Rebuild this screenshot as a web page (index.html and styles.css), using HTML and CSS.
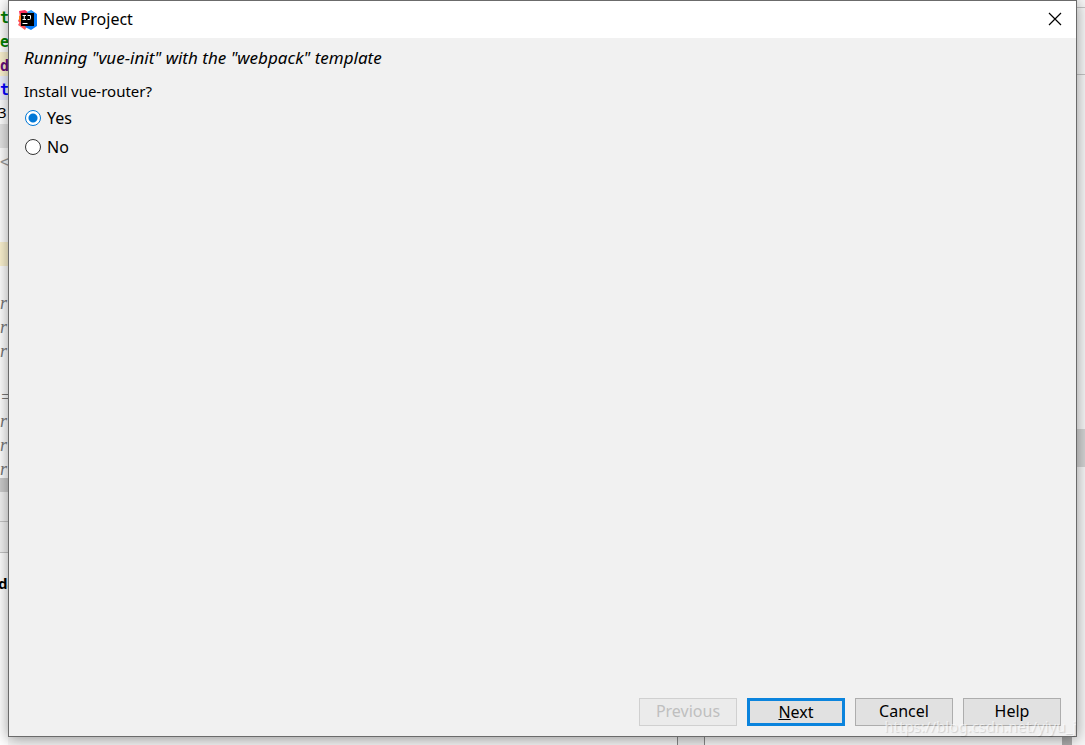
FILE: index.html
```
<!DOCTYPE html>
<html lang="en">
<head>
    <meta charset="UTF-8">
    <meta name="viewport" content="width=device-width, initial-scale=1.0">
    <title>New Project</title>
    <link rel="stylesheet" href="styles.css">
</head>
<body>
    <div class="desktop">
        <div class="editor">
            <div class="line tag">t</div>
            <div class="line tag">e</div>
            <div class="line attr warn">d</div>
            <div class="line blue">t</div>
            <div class="line plain">3</div>
            <div class="line current"></div>
            <div class="line angle">&lt;</div>
            <div class="line"></div>
            <div class="line"></div>
            <div class="line short"></div>
            <div class="line warn"></div>
            <div class="line"></div>
            <div class="line comment">r</div>
            <div class="line comment">r</div>
            <div class="line comment">r</div>
            <div class="line short"></div>
            <div class="line comment">=</div>
            <div class="line comment">r</div>
            <div class="line comment">r</div>
            <div class="line comment short">r</div>
            <div class="hscroll"></div>
            <div class="crumbs"></div>
            <div class="toolbar"></div>
            <div class="console">da</div>
        </div>

        <form class="dialog">
            <div class="title-bar">
                <svg class="logo" width="20" height="20" viewBox="0 0 20 20">
                    <path d="M1 1l6-1 4 3-1 7-7 4-3-3 2-4z" fill="#fe315d"/>
                    <path d="M0 15l3-5 7 4-3 6-4-3z" fill="#fb5a5f"/>
                    <path d="M1 6l3-2 0 8-3-1z" fill="#f97a12"/>
                    <path d="M13 0l6 4v12l-6 4-6-3 5-8z" fill="#087cfa"/>
                    <path d="M9 2l4-2 2 3-4 2z" fill="#2b9af3"/>
                    <rect x="3" y="3" width="13" height="13" fill="#000"/>
                    <path d="M4.500 5.500h3.500M6.250 5.500v4M4.500 9.500h3.500M9.500 5.500h3v3q0 1-1 1h-2M4.500 13.500h5" fill="none" stroke="#fff" stroke-width="1"/>
                </svg>
                <span class="title">New Project</span>
                <button type="button" class="close" aria-label="Close">
                    <svg width="14" height="14" viewBox="0 0 14 14">
                        <path d="M1 1l12 12M13 1L1 13" stroke="#000" stroke-width="1.200"/>
                    </svg>
                </button>
            </div>
            <div class="content">
                <p class="running">Running "vue-init" with the "webpack" template</p>
                <fieldset class="question">
                    <legend>Install vue-router?</legend>
                    <label class="option"><input type="radio" name="router" checked>Yes</label>
                    <label class="option"><input type="radio" name="router">No</label>
                </fieldset>
            </div>
            <div class="buttons">
                <button type="button" disabled>Previous</button>
                <button type="button" class="default"><u>N</u>ext</button>
                <button type="button">Cancel</button>
                <button type="button">Help</button>
            </div>
            <span class="watermark">https://blog.csdn.net/yiyu_j</span>
        </form>

        <div class="side">
            <div class="side-top"></div>
            <div class="side-tabs"></div>
            <div class="side-panel"></div>
            <div class="side-thumb"></div>
        </div>

        <div class="bottom">
            <div class="bottom-divider"></div>
            <div class="bottom-thumb"></div>
        </div>
    </div>
</body>
</html>
```

FILE: styles.css
```
* {
    box-sizing: border-box;
}
body {
    margin: 0;
    font-family: "Noto Sans", "Open Sans", sans-serif;
    font-size: 16px;
    color: #000;
    background-color: #f7f7f7;
}
.desktop {
    display: grid;
    grid-template-columns: 8px 1fr 8px;
    grid-template-rows: 1fr 8px;
    height: 100vh;
    overflow: hidden;
}

/* editor behind the dialog */
.editor {
    grid-row: 1 / 3;
    padding-top: 4px;
    overflow: hidden;
    background-color: #fff;
    font-family: "DejaVu Sans Mono", monospace;
    font-size: 15px;
}
.line {
    height: 24px;
    line-height: 28px;
}
.line.short {
    height: 22px;
}
.tag {
    color: #008000;
    font-weight: bold;
}
.attr {
    color: #660e7a;
    font-weight: bold;
}
.blue {
    color: #0000ff;
    font-weight: bold;
    background-color: #edf0ff;
}
.plain {
    font-family: "Noto Sans", sans-serif;
    text-indent: -2px;
    line-height: 24px;
}
.warn {
    background-color: #fcf3d0;
}
.current {
    background-color: #e4e4e4;
}
.angle {
    color: #999;
}
.comment {
    color: #777;
    font-family: "Liberation Serif", serif;
    font-style: italic;
    font-size: 18px;
    line-height: 26px;
}
.hscroll {
    height: 14px;
    background-color: #ccc;
}
.crumbs {
    height: 30px;
    background-color: #f2f2f2;
    border-bottom: 1px solid #c4c4c4;
}
.toolbar {
    height: 31px;
    background-color: #f2f2f2;
    border-bottom: 1px solid #c4c4c4;
}
.console {
    padding-top: 20px;
    font-family: "Noto Sans", sans-serif;
    font-weight: bold;
    text-indent: -2px;
}

/* dialog */
.dialog {
    position: relative;
    display: flex;
    flex-direction: column;
    background-color: #f1f1f1;
    border: 1px solid #6b6b6b;
    box-shadow: 0 2px 14px rgba(0, 0, 0, 0.4);
}
.title-bar {
    display: flex;
    align-items: center;
    height: 37px;
    padding: 0 14px 0 9px;
    background-color: #fff;
}
.title {
    flex: 1;
    margin-left: 5px;
    line-height: 24px;
    padding-bottom: 2px;
}
.close {
    display: flex;
    padding: 0 0 2px;
    border: none;
    background: none;
}
.content {
    flex: 1;
    padding: 8px 15px;
}
.running {
    margin: 0;
    font-size: 17px;
    line-height: 24px;
    font-style: italic;
}
.question {
    margin: 9px 0 0;
    padding: 0;
    border: none;
}
.question legend {
    padding: 0;
    font-size: 15px;
    line-height: 24px;
}
.option {
    display: flex;
    align-items: center;
    height: 28px;
    margin-top: 1px;
}
.option input {
    appearance: none;
    width: 16px;
    height: 16px;
    margin: 0 6px 0 1px;
    border: 1px solid #333;
    border-radius: 50%;
    background-color: #fff;
}
.option input:checked {
    border-color: #0078d7;
    background: radial-gradient(circle, #0078d7 4px, #fff 5px);
}
.buttons {
    display: flex;
    justify-content: flex-end;
    gap: 10px;
    padding: 0 15px 10px;
}
.buttons button {
    width: 98px;
    height: 28px;
    padding: 0 0 2px;
    font: inherit;
    line-height: 22px;
    color: #000;
    background-color: #e1e1e1;
    border: 1px solid #adadad;
}
.buttons button:disabled {
    color: #bfbfbf;
    background-color: #ebebeb;
    border-color: #d0d0d0;
}
.buttons .default {
    border: 3px solid #0b84dd;
}
.watermark {
    position: absolute;
    right: 0;
    bottom: 0;
    font-size: 15px;
    color: rgba(255, 255, 255, 0.6);
    text-shadow: 1px 1px 1px rgba(0, 0, 0, 0.15);
    pointer-events: none;
}

/* right and bottom edges of the main window */
.side {
    grid-row: 1 / 3;
    grid-column: 3;
}
.side-top {
    height: 8px;
    border-bottom: 1px solid #c4c4c4;
}
.side-tabs {
    height: 67px;
    border-bottom: 1px solid #c4c4c4;
}
.side-panel {
    height: 354px;
}
.side-thumb {
    height: 38px;
    background-color: rgba(0, 0, 0, 0.14);
}
.bottom {
    grid-column: 2;
    display: flex;
    justify-content: flex-end;
}
.bottom-divider {
    width: 28px;
    margin-right: 357px;
    border-left: 1px solid #888;
    border-right: 1px solid #888;
    background-color: rgba(0, 0, 0, 0.04);
}
.bottom-thumb {
    width: 10px;
    margin-right: 5px;
    background-color: rgba(0, 0, 0, 0.3);
}
```
